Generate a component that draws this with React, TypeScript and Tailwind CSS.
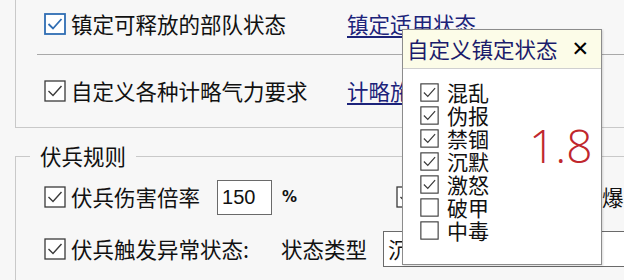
import React from "react";

const font = { fontFamily: '"Noto Sans CJK SC", "Noto Sans", sans-serif' };

function Box({ size = 22, checked = true, blue = false }: { size?: number; checked?: boolean; blue?: boolean }) {
  const c = blue ? "#2f6db3" : "#3a3a3a";
  const s = size;
  return (
    <svg width={s} height={s} viewBox="0 0 22 22" className="shrink-0">
      <rect x="1" y="1" width="20" height="20" fill="#ffffff" stroke={c} strokeWidth={blue ? 1.8 : 1.3} />
      {checked && (
        <polyline points="4.5,11 9,15.5 17.5,6" fill="none" stroke={c} strokeWidth={blue ? 1.8 : 1.4} />
      )}
    </svg>
  );
}

const popupItems: [string, boolean][] = [
  ["混乱", true],
  ["伪报", true],
  ["禁锢", true],
  ["沉默", true],
  ["激怒", true],
  ["破甲", false],
  ["中毒", false],
];

const T = "shrink-0 whitespace-nowrap text-[21.5px] leading-[22px]";

export default function App() {
  return (
    <div className="relative flex h-[280px] w-[640px] overflow-hidden bg-[#f7f7f7] text-[#111]" style={font}>
      <div className="w-[624px] shrink-0 overflow-hidden pl-[15px]">
        {/* top group box */}
        <div className="h-[128px] border-b border-l border-[#c9c9c9]">
          <div className="flex h-[48px] items-center pl-[28px]">
            <div className="flex w-[303px] shrink-0 items-center gap-[5px]">
              <Box blue />
              <span className={T}>镇定可释放的部队状态</span>
            </div>
            <span className={`${T} text-[#1c237a] underline underline-offset-[3px]`}>镇定适用状态</span>
          </div>
          <div className="ml-[21px] mt-[6px] h-px bg-[#a9a9a9]" />
          <div className="flex h-[72px] items-center pl-[28px]">
            <div className="flex w-[303px] shrink-0 items-center gap-[5px]">
              <Box />
              <span className={T}>自定义各种计略气力要求</span>
            </div>
            <span className={`${T} text-[#1c237a] underline underline-offset-[3px]`}>计略施放气力</span>
          </div>
        </div>

        {/* second group box */}
        <fieldset className="mt-[17px] h-[200px] border-l border-t border-[#c9c9c9]">
          <legend className="ml-[14px] px-[10px] text-[21.5px] leading-[22px]">伏兵规则</legend>
          <div className="flex h-[60px] items-center pl-[28px]">
            <Box />
            <span className={`${T} ml-[5px]`}>伏兵伤害倍率</span>
            <div
              className="ml-[17px] flex h-[35px] w-[55px] shrink-0 items-center border border-[#6a6a6a] bg-white pl-[4px] text-[20px] leading-[20px]"
              style={{ fontFamily: '"Liberation Sans", sans-serif' }}
            >
              150
            </div>
            <span className="ml-[10px] shrink-0 text-[15px] font-bold leading-[15px]" style={{ fontFamily: '"DejaVu Sans", sans-serif' }}>
              %
            </span>
            <div className="ml-[99px] flex shrink-0 items-center">
              <Box />
              <span className={`${T} ml-[12px]`}>伏兵攻击时触发引爆</span>
            </div>
          </div>
          <div className="flex h-[44px] items-center pl-[28px]">
            <Box />
            <span className={`${T} ml-[5px] w-[210px]`}>伏兵触发异常状态:</span>
            <span className={T}>状态类型</span>
            <div className="ml-[16px] flex h-[36px] w-[260px] shrink-0 items-center border border-[#6a6a6a] bg-white pl-[4px] text-[21.5px] leading-[22px]">
              沉默
            </div>
          </div>
        </fieldset>
      </div>
      <div className="flex-1 bg-white" />

      {/* popup */}
      <div className="absolute left-[402px] top-[29px] flex h-[236px] w-[200px] flex-col border border-[#8c8c8c] bg-white shadow-[1px_1px_2px_rgba(0,0,0,0.15)]">
        <div className="flex h-[39px] shrink-0 items-center justify-between border-b border-[#cfcfcf] bg-[#fcfce8] pl-[4px] pr-[12px]">
          <span className="text-[21.5px] leading-[22px] text-[#1b1b6b]">自定义镇定状态</span>
          <span className="text-[21px] font-bold leading-[21px] text-black" style={{ fontFamily: '"DejaVu Sans", sans-serif' }}>
            ✕
          </span>
        </div>
        <div className="flex pl-[17px] pt-[12px]">
          <div className="flex w-[109px] shrink-0 flex-col">
            {popupItems.map(([label, on]) => (
              <div key={label} className="flex h-[23px] items-center gap-[8px]">
                <Box size={19} checked={on} />
                <span className="text-[21px] leading-[21px]">{label}</span>
              </div>
            ))}
          </div>
          <div className="mt-[41px] text-[46px] font-light leading-[46px] text-[#c0272d]" style={{ fontFamily: '"Open Sans", sans-serif' }}>
            1.8
          </div>
        </div>
      </div>
    </div>
  );
}
